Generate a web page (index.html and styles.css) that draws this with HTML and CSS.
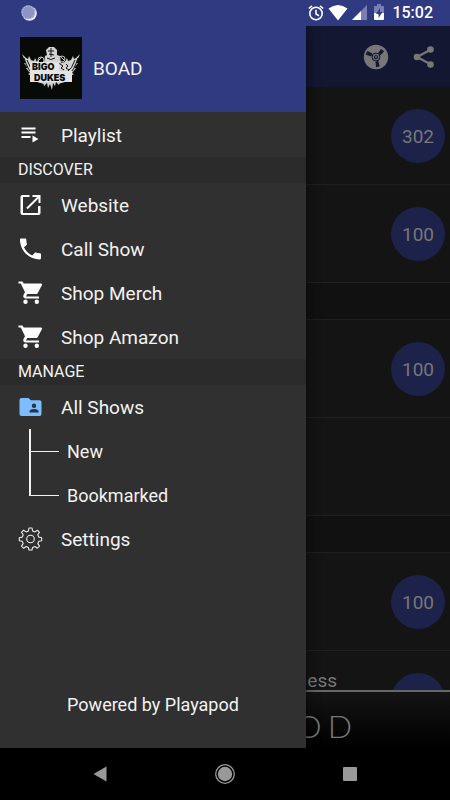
FILE: index.html
```html
<!DOCTYPE html>
<html lang="en">
<head>
<meta charset="utf-8">
<meta name="viewport" content="width=device-width, initial-scale=1">
<title>BOAD</title>
<link rel="stylesheet" href="styles.css">
</head>
<body>
<header class="status">
  <svg class="sync" width="16" height="16" viewBox="0 0 16 16"><circle cx="8.5" cy="8.5" r="7.3" fill="#eceef8"/><circle cx="7.3" cy="7.3" r="7" fill="#8e95c2"/><circle cx="7.3" cy="7.3" r="6.2" fill="none" stroke="#c3c7e2" stroke-dasharray="1.4 1.2"/></svg>
  <div class="status-icons">
    <svg width="16" height="18" viewBox="0 0 16 18" fill="none" stroke="#fff" stroke-width="1.6"><circle cx="8" cy="9.5" r="6.2"/><path d="M8 5.800V10l3 1.800M.8 4.500 4 1.800M15.200 4.500 12 1.800"/></svg>
    <svg width="20" height="18" viewBox="0 0 20 18"><path d="M.5 4.500Q10-2.500 19.500 4.500L10 16.500Z" fill="#fff"/></svg>
    <svg width="16" height="18" viewBox="0 0 16 18"><path d="M15 1v15H0Z" fill="#7880b3"/><path d="M9 7v9H0Z" fill="#fff"/></svg>
    <svg class="battery" width="10" height="18" viewBox="0 0 10 18"><path d="M0 3q0-1 1-1h2V0h4v2h2q1 0 1 1v6H0Z" fill="#7880b3"/><path d="M0 9h10v6q0 1-1 1H1q-1 0-1-1Z" fill="#fff"/><path d="M6 4 2 10h2.500v4L8.500 8H6Z" fill="#303a80"/></svg>
    <time class="clock">15:02</time>
  </div>
</header>

<div class="app">
  <main class="content">
    <div class="toolbar">
      <button class="tool" aria-label="Episodes"><svg width="26" height="26" viewBox="0 0 26 26"><circle cx="13" cy="13" r="12.200" fill="#777"/><g fill="#131731"><path d="M2.600 10.500 4.500 7l5 2.500-1.300 3Z"/><path d="M18 5l3.200 2.300-3.700 4-2.500-2Z"/><path d="M12.500 17.500l3-.5 1 5.500-3.500.8Z"/></g><circle cx="13" cy="13" r="4" fill="#777" stroke="#131731" stroke-width="1"/><path d="m13 10 .8 1.700 2-.2-1.100 1.500 1.100 1.700-2-.2L13 16l-.8-1.500-2 .2 1.100-1.700-1.100-1.500 2 .2Z" fill="#131731"/><circle cx="13" cy="13" r=".9" fill="#777"/></svg></button>
      <button class="tool" aria-label="Share"><svg width="22" height="24" viewBox="0 0 22 24"><path d="M18 4.500 4 12l14 7.500" fill="none" stroke="#777" stroke-width="2.200"/><g fill="#777"><circle cx="17.500" cy="4.500" r="3.300"/><circle cx="4" cy="12" r="3.300"/><circle cx="17.500" cy="19.500" r="3.300"/></g></svg></button>
    </div>
    <div class="list">
      <div class="row"><span class="count">302</span></div>
      <div class="row"><span class="count">100</span></div>
      <div class="divider"></div>
      <div class="row"><span class="count">100</span></div>
      <div class="row"></div>
      <div class="divider"></div>
      <div class="row"><span class="count">100</span></div>
      <div class="row"><span class="name">ess</span><span class="count"></span></div>
    </div>
    <div class="player"><span>O</span><span>D</span></div>
  </main>

  <nav class="drawer">
    <div class="brand">
      <svg class="logo" viewBox="0 0 62 62">
        <rect width="62" height="62" fill="#080a08"/>
        <g fill="#d2d2d2">
          <path d="M2 17l4 4 2 1 1-3 2 4 3 1 1-3 2 4 7 2v20l-7-2-5-3 1-2-5-3 2-1-4-5 2 0-4-5 2 0Z"/>
          <path d="M60 17l-4 4-2 1-1-3-2 4-3 1-1-3-2 4-7 2v20l7-2 5-3-1-2 5-3-2-1 4-5-2 0 4-5-2 0Z"/>
          <path d="M24 26l1-7 2-1-1-5 3-3h5l3 3v5l3 1 1 7Z"/>
          <path d="M17 42h29l-4 3-2-1-1 4-3-3-1 4-2-3-1 7-2-6-2 4-1-5-3 3-1-4-3 1Z"/>
        </g>
        <g fill="none" stroke="#111" stroke-width="1"><path d="M4 21q4 13 10 17M7 23q3 9 8 12M58 21q-4 13-10 17M55 23q-3 9-8 12"/><path d="M28 14h6M29 17l5 1M27 21q4 3 8 0M31 11v9"/></g>
        <g fill="none" stroke="#c8c8c8"><circle cx="21" cy="23" r="3"/><circle cx="42" cy="22" r="3"/><path d="M16 26l6-6M47 26l-6-6"/></g>
        <path d="M10 25h29v9h13v11H10Z" fill="#e4e4e4"/>
        <g class="logo-text"><text x="12" y="33">BIGO</text><text x="14" y="44">DUKES</text></g>
        <path d="M40 27l3 2-2 2 3 2M46 27l2 2-2 2 3 2" stroke="#111" stroke-width="1" fill="none"/>
      </svg>
      <span>BOAD</span>
    </div>
    <ul class="menu first">
      <li><a class="item" href="#"><svg class="icon" viewBox="0 0 24 24"><path d="M3 4.500h14v2H3zm0 4h14v2H3zm0 4.500h9v2H3zM14 12.500v7l6-3.500z"/></svg>Playlist</a></li>
    </ul>
    <h2 class="section">DISCOVER</h2>
    <ul class="menu">
      <li><a class="item" href="#"><svg class="icon" viewBox="0 0 24 24"><path d="M19.500 20h-15V4H11V2H4q-2 0-2 2v16q0 2 2 2h16q2 0 2-2v-7h-2.500zM14 2v2h4.600l-10.800 10.800 1.400 1.400L20 5.400V10h2V2z"/></svg>Website</a></li>
      <li><a class="item" href="#"><svg class="icon" viewBox="0 0 24 24"><path d="M5.500 10.200a17 17 0 0 0 8.200 8.200l2.400-2.500c.3-.3.800-.4 1.200-.3 1.300.5 2.600.7 4 .7.700 0 1.200.5 1.200 1.200v3.800c0 .6-.5 1.200-1.200 1.200C10.500 22.500 1.500 13.500 1.500 2.700c0-.7.500-1.200 1.200-1.200h3.900c.7 0 1.200.5 1.200 1.200 0 1.400.2 2.700.6 4 .1.400 0 .8-.3 1.200z"/></svg>Call Show</a></li>
      <li><a class="item" href="#"><svg class="icon" viewBox="0 0 24 24"><path d="M7 18.500a2.200 2.200 0 1 0 0 4.400 2.200 2.200 0 0 0 0-4.400zM0 .5v2h2.300l4.200 8.800L5 14c-.9 1.700.2 3.400 2 3.400h13.500v-2H7.500l1.200-2.300h8.600q1.300 0 2-1.200l4.200-8c.4-.7-.1-1.500-1-1.500H5.200L4 .5zM18.300 18.500a2.200 2.200 0 1 0 0 4.400 2.200 2.200 0 0 0 0-4.400z"/></svg>Shop Merch</a></li>
      <li><a class="item" href="#"><svg class="icon" viewBox="0 0 24 24"><path d="M7 18.500a2.200 2.200 0 1 0 0 4.400 2.200 2.200 0 0 0 0-4.400zM0 .5v2h2.300l4.200 8.800L5 14c-.9 1.700.2 3.400 2 3.400h13.500v-2H7.500l1.200-2.300h8.600q1.300 0 2-1.200l4.200-8c.4-.7-.1-1.500-1-1.500H5.200L4 .5zM18.300 18.500a2.200 2.200 0 1 0 0 4.400 2.200 2.200 0 0 0 0-4.400z"/></svg>Shop Amazon</a></li>
    </ul>
    <h2 class="section">MANAGE</h2>
    <ul class="menu">
      <li><a class="item" href="#"><svg class="icon" viewBox="0 0 24 24"><path d="M3 3h7l2.300 2.300H21q2 0 2 2V19q0 2-2 2H3q-2 0-2-2V5q0-2 2-2z" fill="#7dbdfb"/><g fill="#263648"><circle cx="15.500" cy="10.800" r="2.200"/><path d="M11 17.500v-1q0-2.500 4.500-2.500t4.500 2.500v1z"/></g></svg>All Shows</a>
        <ul class="menu tree">
          <li><a class="item" href="#">New</a></li>
          <li><a class="item" href="#">Bookmarked</a></li>
        </ul>
      </li>
      <li><a class="item" href="#"><svg class="icon" viewBox="0 0 24 24" ><g fill="none" stroke="#eee" stroke-width="1.100" stroke-linejoin="round"><circle cx="12" cy="12" r="3.800"/><path d="M10.500 1h3l.6 2.900 2.300 1 2.500-1.700 2.100 2.100-1.700 2.500 1 2.300 2.900.6v3l-2.900.6-1 2.300 1.700 2.500-2.100 2.100-2.500-1.700-2.300 1-.6 2.500h-3l-.6-2.500-2.300-1-2.500 1.700-2.100-2.100 1.700-2.500-1-2.300-2.900-.6v-3l2.900-.6 1-2.300L3 5.300l2.100-2.100 2.500 1.700 2.300-1z"/></g></svg>Settings</a></li>
    </ul>
    <footer class="powered">Powered by Playapod</footer>
  </nav>
</div>

<footer class="navbar">
  <button aria-label="Back"><svg width="22" height="22" viewBox="0 0 22 22"><path d="M4.500 11 17.500 3.500v15Z" fill="#999"/></svg></button>
  <button aria-label="Home"><svg width="22" height="22" viewBox="0 0 22 22"><circle cx="11" cy="11" r="9.300" fill="none" stroke="#999" stroke-width="1.300"/><circle cx="11" cy="11" r="7.200" fill="#999"/></svg></button>
  <button aria-label="Recent apps"><svg width="22" height="22" viewBox="0 0 22 22"><rect x="4" y="4" width="14" height="14" rx="1" fill="#999"/></svg></button>
</footer>
</body>
</html>
```
FILE: styles.css
```css
* {
  box-sizing: border-box;
}

body {
  margin: 0;
  height: 100vh;
  display: flex;
  flex-direction: column;
  overflow: hidden;
  background: #000;
  color: #f2f2f2;
  font-family: Roboto, "Liberation Sans", sans-serif;
  font-size: 19px;
}

button {
  padding: 0;
  border: 0;
  background: none;
  display: flex;
}

svg {
  display: block;
  flex: none;
}

.status {
  flex: none;
  height: 26px;
  padding: 0 17px 0 21px;
  display: flex;
  align-items: center;
  justify-content: space-between;
  background: #303a80;
}

.status-icons {
  display: flex;
  align-items: center;
  gap: 4px;
}

.battery {
  margin: 0 4px 0 2px;
}

.clock {
  color: #fff;
  font-size: 16px;
  font-weight: 500;
  line-height: 28px;
}

.app {
  position: relative;
  flex: 1;
  min-height: 0;
}

.content {
  height: 100%;
  display: flex;
  flex-direction: column;
  background: #141414;
  color: #777;
}

.toolbar {
  flex: none;
  height: 61px;
  padding: 0 15px 0 0;
  display: flex;
  align-items: center;
  justify-content: flex-end;
  gap: 24px;
  background: #131731;
}

.list {
  flex: 1;
  min-height: 0;
  overflow: hidden;
}

.row {
  height: 98px;
  padding: 0 5px;
  display: flex;
  align-items: center;
  justify-content: flex-end;
  border-bottom: 1px solid #202020;
}

.name {
  margin-right: 54px;
  align-self: flex-start;
  line-height: 60px;
}

.count {
  width: 54px;
  height: 54px;
  border-radius: 50%;
  background: #1d224b;
  line-height: 55px;
  text-align: center;
}

.divider {
  height: 37px;
  background: #111;
  border-bottom: 1px solid #202020;
}

.player {
  flex: none;
  height: 58px;
  padding: 12px 98px 0 0;
  display: flex;
  justify-content: flex-end;
  gap: 6px;
  border-top: 2px solid #666;
  background: linear-gradient(#141414, #000);
  font-family: Lato, sans-serif;
  font-size: 32px;
  font-weight: 300;
  line-height: 44px;
}

.drawer {
  position: absolute;
  inset: 0 auto 0 0;
  width: 68%;
  display: flex;
  flex-direction: column;
  background: #303030;
  box-shadow: 0 0 12px rgba(0, 0, 0, 0.6);
  clip-path: inset(0 -16px 0 0);
}

.brand {
  flex: none;
  height: 86px;
  padding: 0 20px 2px;
  display: flex;
  align-items: center;
  gap: 11px;
  background: #303a80;
}

.logo {
  width: 62px;
  height: 62px;
}

.logo-text {
  fill: #080a08;
  font-family: Inter, sans-serif;
  font-size: 9px;
  font-weight: 900;
}

.menu {
  margin: 0;
  padding: 0;
  list-style: none;
}

.first {
  padding-top: 1px;
}

.item {
  height: 44px;
  padding-left: 18px;
  display: flex;
  align-items: center;
  gap: 18px;
  color: inherit;
  text-decoration: none;
}

.icon {
  width: 25px;
  height: 24px;
  fill: #fff;
}

.section {
  margin: 0;
  padding-left: 18px;
  background: #2b2b2b;
  font-size: 16px;
  font-weight: 400;
  line-height: 26px;
}

.tree {
  padding-left: 29px;
  font-size: 18px;
}

.tree li {
  position: relative;
}

.tree .item {
  padding-left: 38px;
}

.tree li::before,
.tree li::after {
  content: "";
  position: absolute;
  left: 0;
  background: #f2f2f2;
}

.tree li::before {
  top: 0;
  width: 2px;
  height: 100%;
}

.tree li:last-child::before {
  height: 50%;
}

.tree li::after {
  top: 50%;
  width: 30px;
  height: 1px;
}

.powered {
  margin-top: auto;
  padding-bottom: 32px;
  font-size: 18px;
  line-height: 22px;
  text-align: center;
}

.navbar {
  flex: none;
  height: 52px;
  padding: 0 38px;
  display: grid;
  grid-template-columns: repeat(3, 1fr);
  place-items: center;
}
```
